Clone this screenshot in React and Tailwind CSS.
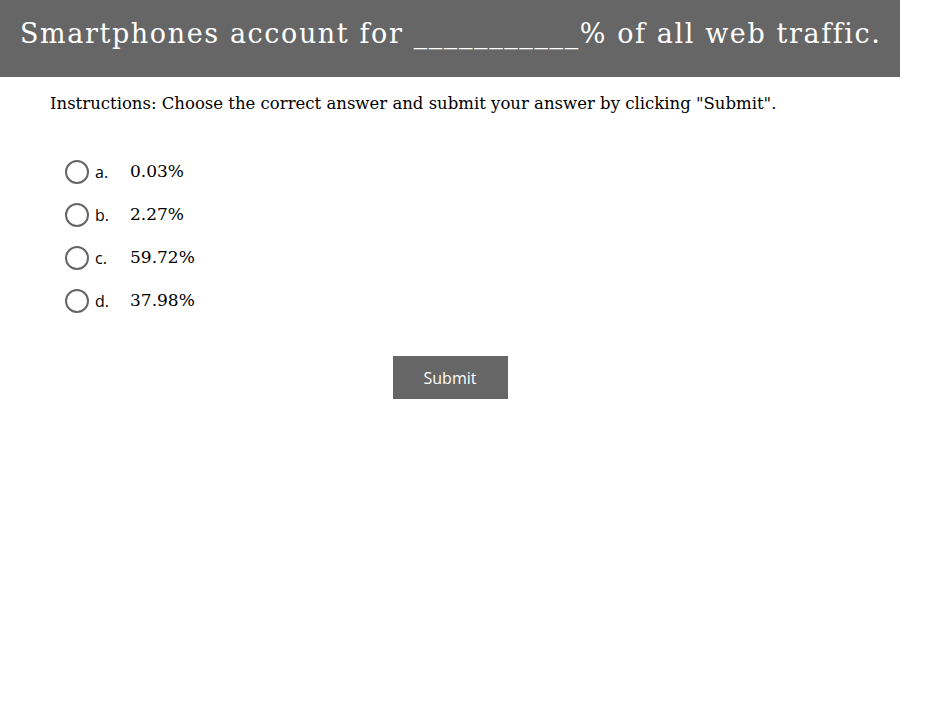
import React, { useState } from 'react';

const answers = [
  { key: 'a', label: '0.03%' },
  { key: 'b', label: '2.27%' },
  { key: 'c', label: '59.72%' },
  { key: 'd', label: '37.98%' },
];

export default function App() {
  const [choice, setChoice] = useState(null);

  return (
    <div className="w-[900px] bg-white min-h-[720px]">
      <div className="h-[77px] bg-[#666666] flex items-center px-5">
        <h1 className="text-white text-[27px] tracking-[1.6px] whitespace-nowrap font-['DejaVu_Serif',serif] leading-none pb-[10px]">
          Smartphones account for ___________% of all web traffic.
        </h1>
      </div>

      <p className="mt-[16px] pl-[50px] text-[16.5px] text-black font-['DejaVu_Serif',serif] leading-[22px]">
        Instructions: Choose the correct answer and submit your answer by clicking "Submit".
      </p>

      <div className="mt-[45px] pl-[65px] flex flex-col gap-[19px]">
        {answers.map((a) => (
          <label key={a.key} className="flex items-center h-[24px] cursor-pointer">
            <span className="w-[24px] h-[24px] rounded-full border-2 border-[#666666] flex items-center justify-center">
              {choice === a.key && <span className="w-[12px] h-[12px] rounded-full bg-[#666666]" />}
            </span>
            <input
              type="radio"
              name="answer"
              className="hidden"
              checked={choice === a.key}
              onChange={() => setChoice(a.key)}
            />
            <span className="ml-[6px] w-[35px] text-[16px] font-['Open_Sans',sans-serif] text-black">{a.key}.</span>
            <span className="text-[17px] font-['DejaVu_Serif',serif] text-black">{a.label}</span>
          </label>
        ))}
      </div>

      <div className="flex justify-center mt-[43px]">
        <button className="w-[115px] h-[43px] bg-[#666666] text-white text-[16px] font-['Open_Sans',sans-serif]">
          Submit
        </button>
      </div>
    </div>
  );
}
